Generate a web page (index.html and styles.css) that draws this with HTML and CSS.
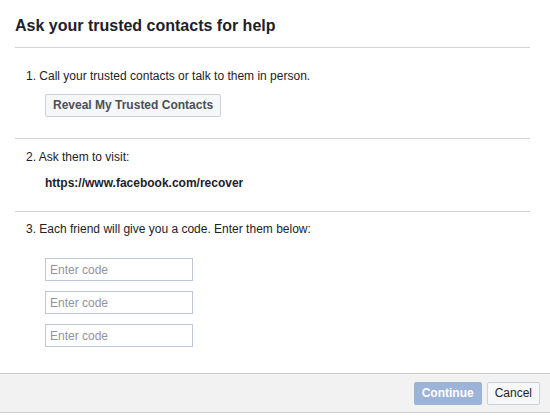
FILE: index.html
```html
<!DOCTYPE html>
<html>
<head>
<meta charset="utf-8">
<link rel="stylesheet" href="styles.css">
</head>
<body>
<div class="dialog">
  <div class="header">
    <h2 class="title">Ask your trusted contacts for help</h2>
  </div>
  <div class="body">
    <div class="section s1">
      <div class="step">1. Call your trusted contacts or talk to them in person.</div>
      <div class="indent"><button class="btn">Reveal My Trusted Contacts</button></div>
    </div>
    <div class="section s2">
      <div class="step">2. Ask them to visit:</div>
      <div class="indent url">https://www.facebook.com/recover</div>
    </div>
    <div class="section s3">
      <div class="step">3. Each friend will give you a code. Enter them below:</div>
      <div class="indent codes">
        <input class="code" type="text" placeholder="Enter code">
        <input class="code" type="text" placeholder="Enter code">
        <input class="code" type="text" placeholder="Enter code">
      </div>
    </div>
  </div>
  <div class="footer">
    <button class="btn primary">Continue</button>
    <button class="btn cancel">Cancel</button>
  </div>
</div>
</body>
</html>
```

FILE: styles.css
```css
html, body {
  margin: 0;
  padding: 0;
  background: #fff;
}
body {
  font-family: "Liberation Sans", Arial, Helvetica, sans-serif;
  font-size: 12px;
  line-height: 16px;
  color: #1d2129;
}
.dialog {
  width: 550px;
  height: 416px;
  display: flex;
  flex-direction: column;
}
.header {
  margin: 0 20px 0 15px;
  padding: 16px 0 0;
  height: 31px;
  border-bottom: 1px solid #d3d3d3;
}
.title {
  margin: 0;
  font-size: 16px;
  line-height: 20px;
  font-weight: bold;
  color: #1d2129;
}
.body {
  flex: 1;
  margin: 0 20px 0 15px;
}
.section {
  padding: 0 0 0 11px;
  border-bottom: 1px solid #d3d3d3;
}
.section.s3 {
  border-bottom: none;
}
.s1 {
  padding-top: 20px;
  padding-bottom: 21px;
}
.s1 .indent {
  margin-top: 10px;
}
.s2 {
  padding-top: 10px;
  padding-bottom: 20px;
}
.s2 .indent {
  margin-top: 10px;
}
.s3 {
  padding-top: 9px;
}
.indent {
  padding-left: 19px;
}
.url {
  font-weight: bold;
  color: #1d2129;
}
.codes {
  margin-top: 21px;
  display: flex;
  flex-direction: column;
  align-items: flex-start;
  gap: 10px;
}
.code {
  box-sizing: border-box;
  width: 148px;
  height: 23px;
  margin: 0;
  padding: 0 4px;
  border: 1px solid #bdc7d8;
  font-family: "Liberation Sans", Arial, sans-serif;
  font-size: 12px;
  color: #1d2129;
  background: #fff;
  outline: none;
}
.code::placeholder {
  color: #90949c;
}
.btn {
  box-sizing: border-box;
  height: 23px;
  margin: 0;
  padding: 0 7px;
  border: 1px solid #ccd0d5;
  border-radius: 2px;
  background: #f6f7f9;
  color: #4b4f56;
  font-family: "Liberation Sans", Arial, sans-serif;
  font-size: 12px;
  font-weight: bold;
  line-height: 21px;
}
.footer {
  height: 40px;
  border-top: 1px solid #cccccc;
  border-bottom: 1px solid #cccccc;
  background: #f2f2f2;
  display: flex;
  justify-content: flex-end;
  align-items: flex-start;
  gap: 5px;
  padding: 8px 10px 0 0;
  box-sizing: border-box;
  margin-bottom: 3px;
}
.primary {
  background: #9cb4d8;
  border-color: #9cb4d8;
  color: #fff;
}
.cancel {
  font-weight: normal;
  color: #1d2129;
}
```
